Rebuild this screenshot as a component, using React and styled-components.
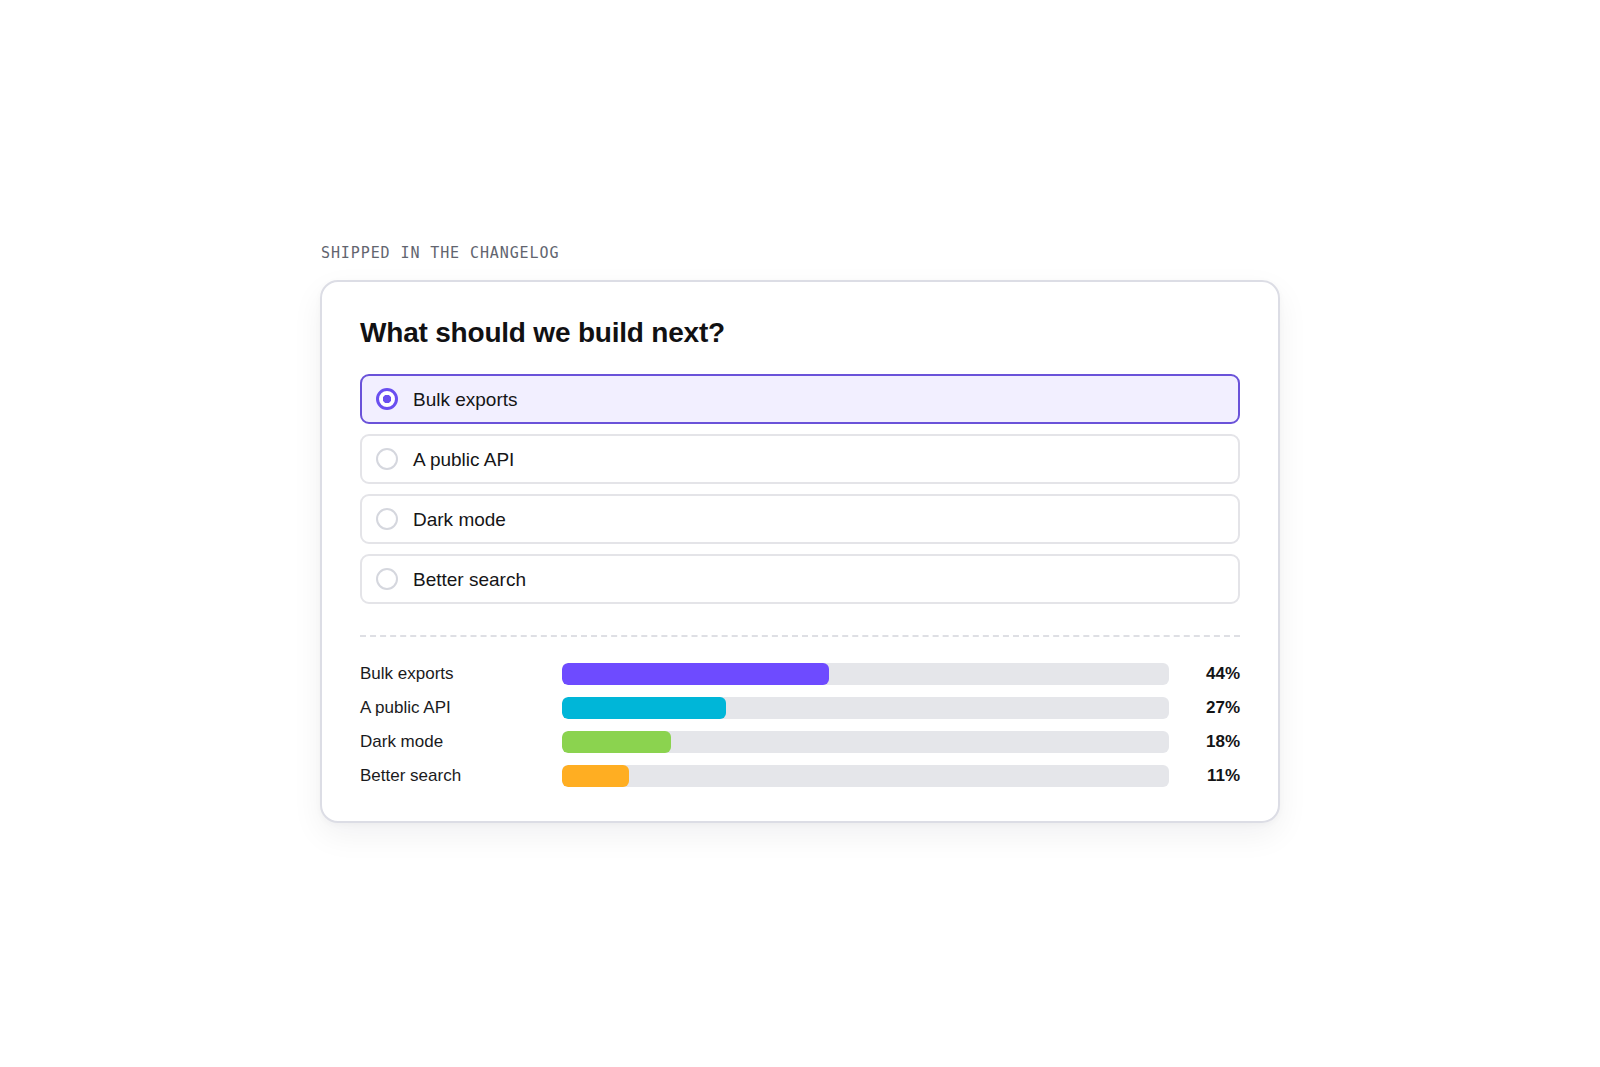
import { useState } from "react";
import styled, { createGlobalStyle } from "styled-components";

const options = [
  { id: "bulk", label: "Bulk exports", pct: 44, color: "#6e4bff" },
  { id: "api", label: "A public API", pct: 27, color: "#00b6d8" },
  { id: "dark", label: "Dark mode", pct: 18, color: "#8bd34f" },
  { id: "search", label: "Better search", pct: 11, color: "#ffae22" }
];

const GlobalStyle = createGlobalStyle`
  * { box-sizing: border-box; }
  body {
    margin: 0;
    background: #ffffff;
    font-family: "Liberation Sans", Arial, sans-serif;
    color: #161618;
  }
`;

const App = () => {
  const [selected, setSelected] = useState("bulk");

  return (
    <Page>
      <GlobalStyle />
      <Wrapper>
        <Eyebrow>Shipped in the changelog</Eyebrow>
        <Card>
          <Title>What should we build next?</Title>

          <OptionList>
            {options.map((opt) => (
              <Option
                key={opt.id}
                $active={selected === opt.id}
                onClick={() => setSelected(opt.id)}
              >
                <Radio $active={selected === opt.id} />
                <OptionLabel>{opt.label}</OptionLabel>
              </Option>
            ))}
          </OptionList>

          <Divider />

          <Results>
            {options.map((opt) => (
              <ResultRow key={opt.id}>
                <ResultLabel>{opt.label}</ResultLabel>
                <Track>
                  <Fill $color={opt.color} style={{ width: `${opt.pct}%` }} />
                </Track>
                <Percent>{opt.pct}%</Percent>
              </ResultRow>
            ))}
          </Results>
        </Card>
      </Wrapper>
    </Page>
  );
};

export default App;

const Page = styled.main`
  min-height: 100vh;
  display: flex;
  align-items: center;
  justify-content: center;
`;

const Wrapper = styled.div`
  width: 960px;
  display: flex;
  flex-direction: column;
`;

const Eyebrow = styled.div`
  font-family: "DejaVu Sans Mono", "Liberation Mono", monospace;
  font-size: 15px;
  line-height: 18px;
  letter-spacing: 0.9px;
  text-transform: uppercase;
  color: #62656f;
  padding-left: 1px;
  margin-bottom: 18px;
`;

const Card = styled.section`
  background: #ffffff;
  border: 2px solid #dcdde5;
  border-radius: 18px;
  padding: 34px 38px 34px;
  box-shadow: 0 12px 32px rgba(20, 22, 40, 0.06), 0 2px 6px rgba(20, 22, 40, 0.03);
`;

const Title = styled.h2`
  margin: 0 0 24px;
  font-size: 28px;
  line-height: 1.2;
  font-weight: 700;
  letter-spacing: -0.2px;
  color: #111113;
`;

const OptionList = styled.div`
  display: flex;
  flex-direction: column;
  gap: 10px;
`;

const Option = styled.button`
  display: flex;
  align-items: center;
  gap: 15px;
  height: 50px;
  padding: 0 14px;
  border-radius: 9px;
  border: 2px solid ${({ $active }) => ($active ? "#6a52d9" : "#e4e4e8")};
  background: ${({ $active }) => ($active ? "#f2efff" : "#ffffff")};
  font: inherit;
  text-align: left;
  cursor: pointer;
`;

const Radio = styled.span`
  flex: none;
  width: 22px;
  height: 22px;
  border-radius: 50%;
  border: ${({ $active }) => ($active ? "3.5px solid #6a4ff0" : "2.5px solid #d5d7de")};
  background: ${({ $active }) =>
    $active ? "radial-gradient(circle, #6a4ff0 0 4px, #ffffff 4.5px)" : "#ffffff"};
`;

const OptionLabel = styled.span`
  font-size: 19px;
  color: #151517;
  padding-top: 2px;
`;

const Divider = styled.hr`
  margin: 31px 0 26px;
  border: none;
  border-top: 2px dashed #dedfe4;
`;

const Results = styled.div`
  display: flex;
  flex-direction: column;
  gap: 12px;
`;

const ResultRow = styled.div`
  display: grid;
  grid-template-columns: 188px 1fr 57px;
  column-gap: 14px;
  align-items: center;
  height: 22px;
`;

const ResultLabel = styled.span`
  font-size: 17px;
  color: #1a1a1c;
`;

const Track = styled.div`
  height: 22px;
  border-radius: 6px;
  background: #e5e6ea;
  overflow: hidden;
`;

const Fill = styled.div`
  height: 100%;
  border-radius: 6px;
  background: ${({ $color }) => $color};
`;

const Percent = styled.span`
  font-size: 17px;
  font-weight: 700;
  text-align: right;
  color: #141416;
`;
